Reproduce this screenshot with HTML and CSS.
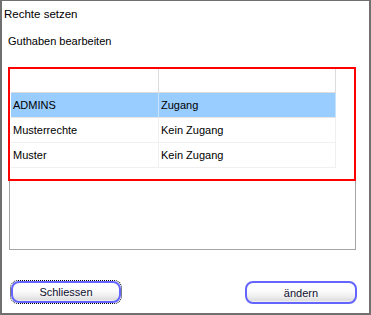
FILE: index.html
```html
<!DOCTYPE html>
<html lang="de">
<head>
    <meta charset="UTF-8">
    <title>Rechte setzen</title>
    <link rel="stylesheet" href="styles.css">
</head>
<body>
    <div class="dialog">
        <div class="title">Rechte setzen</div>
        <div class="caption">Guthaben bearbeiten</div>

        <div class="listbox">
            <div class="grid">
                <div class="cell head"></div>
                <div class="cell head"></div>

                <div class="cell selected">ADMINS</div>
                <div class="cell selected">Zugang</div>

                <div class="cell">Musterrechte</div>
                <div class="cell">Kein Zugang</div>

                <div class="cell">Muster</div>
                <div class="cell">Kein Zugang</div>
            </div>
            <div class="marker"></div>
        </div>

        <div class="actions">
            <span class="focus-ring"><button class="btn">Schliessen</button></span>
            <button class="btn wide">ändern</button>
        </div>
    </div>
</body>
</html>
```

FILE: styles.css
```css
body {
    margin: 0;
    padding: 0;
    background-color: #ffffff;
    font-family: "Liberation Sans", Arial, sans-serif;
    font-size: 11px;
    color: #000;
}

.dialog {
    box-sizing: border-box;
    width: 371px;
    height: 315px;
    border: 2px solid #707070;
    border-top-width: 1px;
    background-color: #fff;
}

.title {
    margin-top: 6px;
    padding-left: 2px;
    font-size: 11.5px;
    line-height: 14px;
}

.caption {
    margin-top: 14px;
    padding-left: 6px;
    line-height: 13px;
}

.listbox {
    position: relative;
    box-sizing: border-box;
    width: 347px;
    height: 182px;
    margin: 20px 0 0 7px;
    padding-left: 1px;
    border: 1px solid #a5a5a5;
}

.grid {
    display: grid;
    grid-template-columns: 148px 177px;
}

.cell {
    box-sizing: border-box;
    height: 25px;
    padding-left: 2px;
    line-height: 24px;
    border-right: 1px solid #f0f0f0;
    border-bottom: 1px solid #f0f0f0;
    white-space: nowrap;
}

.cell.head {
    height: 24px;
    border-color: #dcdcdc;
}

.cell.selected {
    background-color: #99ccff;
    border-right-color: #c8e2ff;
    border-bottom-color: #e6e6e6;
}

/* red frame drawn over the list */
.marker {
    position: absolute;
    top: -2px;
    left: -2px;
    box-sizing: border-box;
    width: 348px;
    height: 114px;
    border: 2px solid #ff0000;
}

.actions {
    display: flex;
    justify-content: space-between;
    align-items: flex-end;
    margin-top: 30px;
    padding: 0 12px 0 8px;
}

.focus-ring {
    display: inline-block;
    border: 1px dotted #000;
    border-radius: 8px;
}

.btn {
    box-sizing: border-box;
    width: 110px;
    height: 22px;
    padding: 0;
    border: 2px solid #6464ff;
    border-radius: 8px;
    background: linear-gradient(#ffffff 0%, #fbfbfb 45%, #ececec 75%, #dedede 90%, #f2f2f2 100%);
    font-family: "Liberation Sans", Arial, sans-serif;
    font-size: 11px;
    color: #101030;
    cursor: pointer;
}

.btn.wide {
    width: 112px;
    height: 23px;
}
```
